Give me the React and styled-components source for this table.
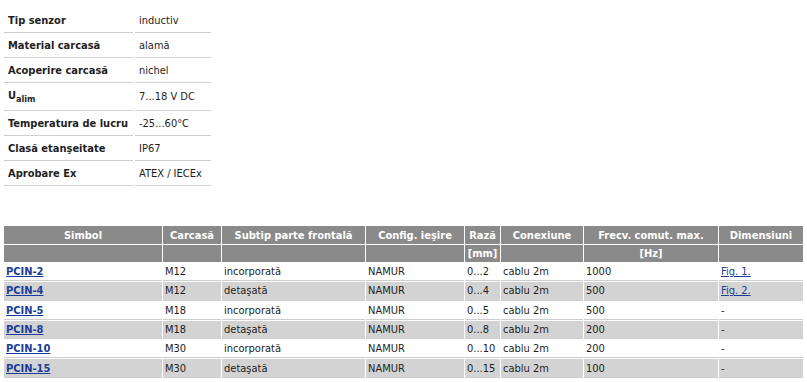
import styled, { createGlobalStyle } from "styled-components";

const specs = [
  { label: "Tip senzor", value: "inductiv" },
  { label: "Material carcasă", value: "alamă" },
  { label: "Acoperire carcasă", value: "nichel" },
  { label: "U", sub: "alim", value: "7...18 V DC", tall: true },
  { label: "Temperatura de lucru", value: "-25...60°C" },
  { label: "Clasă etanşeitate", value: "IP67" },
  { label: "Aprobare Ex", value: "ATEX / IECEx" },
];

const columns = [
  { title: "Simbol", unit: "", width: 158 },
  { title: "Carcasă", unit: "", width: 58 },
  { title: "Subtip parte frontală", unit: "", width: 143 },
  { title: "Config. ieşire", unit: "", width: 98 },
  { title: "Rază", unit: "[mm]", width: 35 },
  { title: "Conexiune", unit: "", width: 82 },
  { title: "Frecv. comut. max.", unit: "[Hz]", width: 134 },
  { title: "Dimensiuni", unit: "", width: 84 },
];

const products = [
  ["PCIN-2", "M12", "incorporată", "NAMUR", "0...2", "cablu 2m", "1000", "Fig. 1."],
  ["PCIN-4", "M12", "detaşată", "NAMUR", "0...4", "cablu 2m", "500", "Fig. 2."],
  ["PCIN-5", "M18", "incorporată", "NAMUR", "0...5", "cablu 2m", "500", "-"],
  ["PCIN-8", "M18", "detaşată", "NAMUR", "0...8", "cablu 2m", "200", "-"],
  ["PCIN-10", "M30", "incorporată", "NAMUR", "0...10", "cablu 2m", "200", "-"],
  ["PCIN-15", "M30", "detaşată", "NAMUR", "0...15", "cablu 2m", "100", "-"],
];

const GlobalStyle = createGlobalStyle`
  body {
    margin: 0;
    padding: 8px 4px;
    background: #fff;
    color: #1e1e1e;
    font-family: "DejaVu Sans Condensed", "DejaVu Sans", sans-serif;
    font-size: 11px;
  }
`;

const SpecTable = styled.table`
  border-collapse: separate;
  border-spacing: 2px 0;
  margin-left: -2px;
  margin-bottom: 39px;
`;

const SpecRow = styled.tr`
  height: ${(p) => (p.$tall ? 28 : 25)}px;
`;

const SpecLabel = styled.td`
  width: 121px;
  padding: 0 4px;
  font-weight: bold;
  border-bottom: 1px solid #cfcfcf;
  vertical-align: middle;
`;

const SpecValue = styled.td`
  width: 68px;
  padding: 0 4px;
  border-bottom: 1px solid #cfcfcf;
  vertical-align: middle;
  white-space: nowrap;
`;

const Sub = styled.sub`
  font-size: 9px;
  vertical-align: -3px;
`;

const ProductTable = styled.table`
  width: 800px;
  table-layout: fixed;
  border-collapse: separate;
  border-spacing: 1px;
  margin-left: -1px;
`;

const Col = styled.col`
  width: ${(p) => p.$width}px;
`;

const HeadCell = styled.th`
  height: ${(p) => (p.$first ? 18 : 17)}px;
  padding: 0 2px;
  background: #8a8a8a;
  color: #fff;
  font-weight: bold;
  text-align: center;
  white-space: nowrap;
`;

const Cell = styled.td`
  height: 17.3px;
  padding: 0 2px;
  background: ${(p) => (p.$shade ? "#d3d3d3" : "#fff")};
  border-bottom: 1px solid #cdcdcd;
  white-space: nowrap;
`;

const SymbolLink = styled.a`
  color: #1a3c98;
  font-weight: bold;
  text-decoration: underline;
`;

const FigLink = styled.a`
  color: #1a3c98;
  text-decoration: underline;
`;

const App = () => {
  return (
    <>
      <GlobalStyle />
      <SpecTable>
        <tbody>
          {specs.map((s) => (
            <SpecRow key={s.label + (s.sub || "")} $tall={s.tall}>
              <SpecLabel>
                {s.label}
                {s.sub && <Sub>{s.sub}</Sub>}
              </SpecLabel>
              <SpecValue>{s.value}</SpecValue>
            </SpecRow>
          ))}
        </tbody>
      </SpecTable>

      <ProductTable>
        <colgroup>
          {columns.map((c) => (
            <Col key={c.title} $width={c.width} />
          ))}
        </colgroup>
        <thead>
          <tr>
            {columns.map((c) => (
              <HeadCell key={c.title} $first>
                {c.title}
              </HeadCell>
            ))}
          </tr>
          <tr>
            {columns.map((c) => (
              <HeadCell key={c.title}>{c.unit}</HeadCell>
            ))}
          </tr>
        </thead>
        <tbody>
          {products.map((row, i) => (
            <tr key={row[0]}>
              {row.map((v, j) => (
                <Cell key={j} $shade={i % 2 === 1}>
                  {j === 0 ? (
                    <SymbolLink href="#">{v}</SymbolLink>
                  ) : j === 7 && v !== "-" ? (
                    <FigLink href="#">{v}</FigLink>
                  ) : (
                    v
                  )}
                </Cell>
              ))}
            </tr>
          ))}
        </tbody>
      </ProductTable>
    </>
  );
};

export default App;
